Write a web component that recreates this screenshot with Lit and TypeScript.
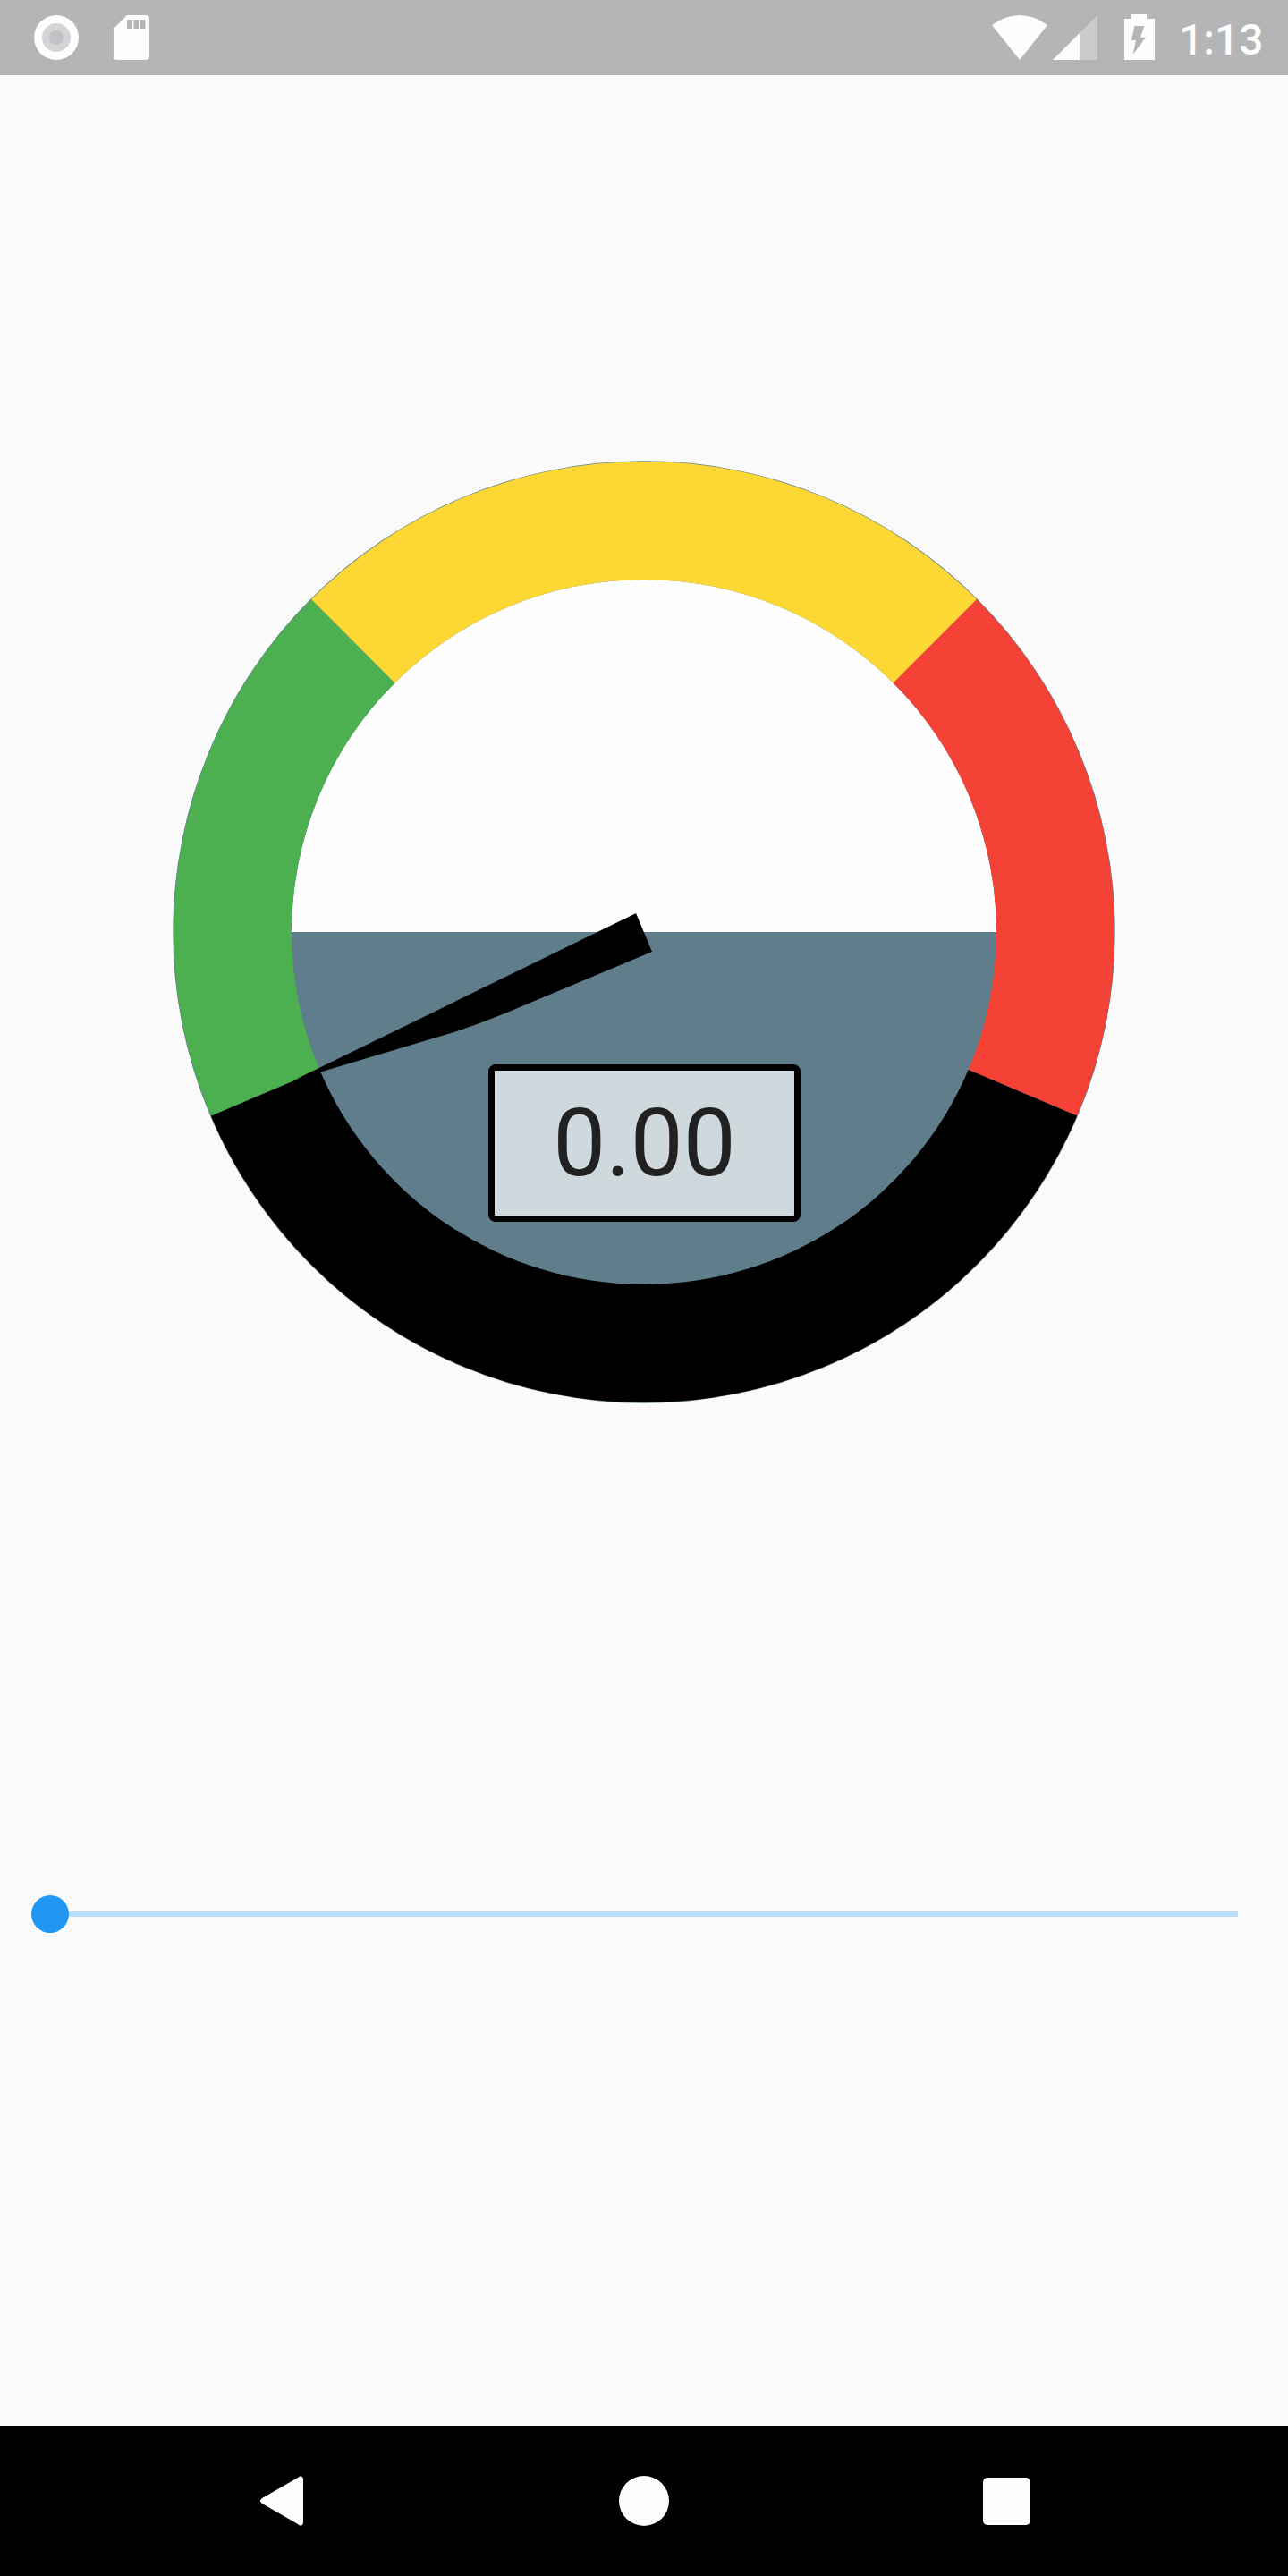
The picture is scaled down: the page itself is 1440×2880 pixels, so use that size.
import { LitElement, html, svg, css } from "lit";
import { customElement } from "lit/decorators.js";

const R_OUTER = 526;
const R_INNER = 394;

// angles in degrees, clockwise from the +x axis
const SEGMENTS = [
  { from: -45, to: 23, color: "#f44336" },
  { from: 23, to: 157, color: "#000000" },
  { from: 157, to: 225, color: "#4caf50" },
  { from: 225, to: 315, color: "#fdd835" },
];

function sector(from: number, to: number) {
  const a = (from * Math.PI) / 180;
  const b = (to * Math.PI) / 180;
  const large = to - from > 180 ? 1 : 0;
  const p = (r: number, t: number) =>
    `${(r * Math.cos(t)).toFixed(2)} ${(r * Math.sin(t)).toFixed(2)}`;
  return `M${p(R_OUTER, a)} A${R_OUTER} ${R_OUTER} 0 ${large} 1 ${p(R_OUTER, b)} L${p(R_INNER, b)} A${R_INNER} ${R_INNER} 0 ${large} 0 ${p(R_INNER, a)} Z`;
}

@customElement("app-root")
export class AppRoot extends LitElement {
  static styles = css`
    :host {
      display: flex;
      flex-direction: column;
      height: 2880px;
      background: #fafafa;
      font-family: Roboto, "Liberation Sans", sans-serif;
    }

    .status {
      height: 84px;
      flex: none;
      background: #b5b5b7;
      display: flex;
      align-items: flex-start;
      justify-content: space-between;
      color: #fdfdfd;
    }

    .status svg {
      display: block;
      flex: none;
    }

    .status__left {
      display: flex;
      padding: 17px 0 0 38px;
      gap: 39px;
    }

    .status__right {
      display: flex;
      padding: 16px 30px 0 0;
    }

    .wifi {
      margin-top: 1px;
    }

    .signal {
      margin: 1px 30px 0 6px;
    }

    .clock {
      margin-left: 27px;
      font-size: 48px;
      font-weight: 500;
      line-height: 52px;
      width: 92px;
      margin-top: 3px;
      white-space: nowrap;
    }

    main {
      flex: 1;
      display: flex;
      flex-direction: column;
      padding-top: 431px;
    }

    .gauge {
      position: relative;
      width: 1054px;
      height: 1054px;
      margin-left: 193px;
    }

    .gauge svg {
      display: block;
    }

    .gauge__value {
      position: absolute;
      left: 353px;
      top: 675px;
      width: 349px;
      height: 176px;
      box-sizing: border-box;
      border: 7px solid #000;
      border-radius: 8px;
      background: #cfd8dc;
      color: #212121;
      font-size: 105px;
      display: flex;
      align-items: center;
      justify-content: center;
    }

    .slider {
      position: relative;
      margin: 550px 56px 0;
      height: 42px;
      display: flex;
      align-items: center;
    }

    .slider__track {
      flex: 1;
      height: 6px;
      background: #bbdefb;
    }

    .slider__thumb {
      position: absolute;
      left: -21px;
      top: 0;
      width: 42px;
      height: 42px;
      border-radius: 50%;
      background: #2196f3;
    }

    .nav {
      height: 168px;
      flex: none;
      background: #000;
      display: grid;
      grid-template-columns: repeat(3, 405px);
      justify-content: center;
      justify-items: center;
      align-items: center;
    }

    .nav svg {
      display: block;
    }
  `;

  render() {
    return html`
      <div class="status">
        <div class="status__left">
          <svg width="50" height="50" viewBox="0 0 50 50">
            <circle cx="25" cy="25" r="25" fill="#fdfdfd" />
            <circle cx="25" cy="25" r="16" fill="#d4d4d6" />
            <circle cx="25" cy="25" r="8" fill="#c2c2c6" />
          </svg>
          <svg width="40" height="50" viewBox="0 0 40 50">
            <path
              d="M15 0H36a4 4 0 0 1 4 4V46a4 4 0 0 1-4 4H4a4 4 0 0 1-4-4V15Z"
              fill="#fdfdfd"
            />
            <rect x="15" y="5" width="6" height="10" fill="#b5b5b7" />
            <rect x="22.5" y="5" width="5.5" height="10" fill="#b5b5b7" />
            <rect x="30" y="5" width="5.5" height="10" fill="#b5b5b7" />
          </svg>
        </div>
        <div class="status__right">
          <svg class="wifi" width="62" height="50" viewBox="0 0 62 50">
            <path d="M0 11Q31 -11 62 11L31 50Z" fill="#fdfdfd" />
          </svg>
          <svg class="signal" width="50" height="50" viewBox="0 0 50 50">
            <path d="M0 50L30 20V50Z" fill="#fdfdfd" />
            <path d="M30 20L50 0V50H30Z" fill="#fdfdfd" fill-opacity="0.3" />
          </svg>
          <svg width="34" height="51" viewBox="0 0 34 51">
            <path d="M8 0H25V5H34V51H0V5H8Z" fill="#fdfdfd" />
            <path
              d="M11.3 13H22.3L18 25.7H24L9.7 44.7L13 29H8Z"
              fill="#b5b5b7"
            />
          </svg>
          <span class="clock">1:13</span>
        </div>
      </div>

      <main>
        <div class="gauge">
          <svg width="1054" height="1054" viewBox="-527 -527 1054 1054">
            <circle r="526.7" fill="#607d8b" />
            <path
              d="M${-R_INNER} 0A${R_INNER} ${R_INNER} 0 0 1 ${R_INNER} 0Z"
              fill="#fefefe"
            />
            ${SEGMENTS.map(
              (s) => svg`<path d=${sector(s.from, s.to)} fill=${s.color} />`
            )}
            <path
              d="M-9 -21L9 22L-158 92Q-183 102 -208 110.6L-390 165Z"
              fill="#000"
            />
          </svg>
          <div class="gauge__value">0.00</div>
        </div>

        <div class="slider">
          <div class="slider__track"></div>
          <div class="slider__thumb"></div>
        </div>
      </main>

      <div class="nav">
        <svg width="48" height="56" viewBox="0 0 48 56">
          <path
            d="M48 4V52C48 55.5 44.5 57 42 54L2 31C-0.7 29 -0.7 27 2 25L42 2C44.5 -1 48 0.5 48 4Z"
            fill="#fdfdfd"
          />
        </svg>
        <svg width="56" height="56" viewBox="0 0 56 56">
          <circle cx="28" cy="28" r="28" fill="#fdfdfd" />
        </svg>
        <svg width="53" height="53" viewBox="0 0 53 53">
          <rect width="53" height="53" rx="5" fill="#fdfdfd" />
        </svg>
      </div>
    `;
  }
}
